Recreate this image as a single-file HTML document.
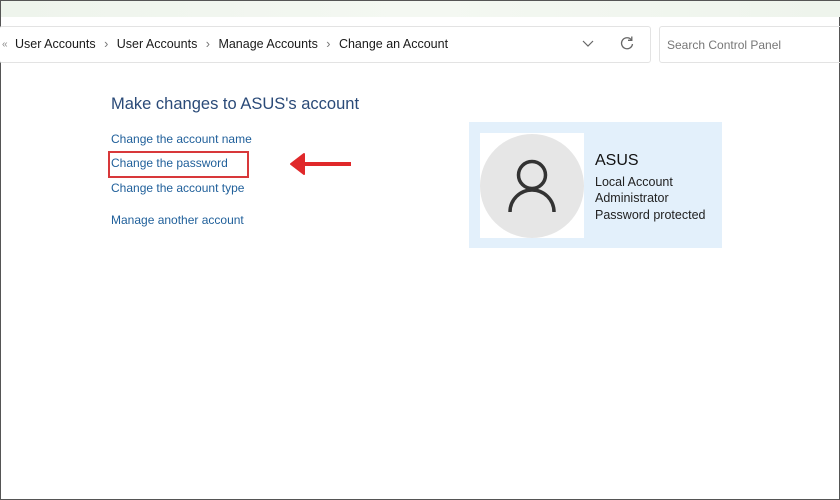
<!DOCTYPE html>
<html><head><style>
*{margin:0;padding:0;box-sizing:border-box}
body{width:840px;height:500px;overflow:hidden;background:#fff;font-family:"Liberation Sans",sans-serif;position:relative;border:1px solid #555}
.top{position:absolute;left:0;top:0;width:840px;height:16px;background:linear-gradient(90deg,#eef4ec,#f4f8f2 50%,#eef4ec)}
.addr{position:absolute;left:-2px;top:25px;width:652px;height:37px;border:1px solid #e3e3e3;border-radius:3px;background:#fff}
.search{position:absolute;left:658px;top:25px;width:190px;height:37px;border:1px solid #e3e3e3;border-radius:3px}
.t{position:absolute;white-space:nowrap}
.crumb{top:36px;font-size:12.5px;color:#1a1a1a}
.lnk{color:#1f5f9a;font-size:12px;left:110px}
</style></head><body>
<div class="top"></div>
<div class="addr"></div>
<div class="search"></div>
<div class="t crumb" style="left:1px;color:#888;font-size:10px;top:38px">«</div>
<div class="t crumb" style="left:14px">User Accounts <span style="color:#777;margin:0 5px">›</span> User Accounts <span style="color:#777;margin:0 5px">›</span> Manage Accounts <span style="color:#777;margin:0 5px">›</span> Change an Account</div>
<svg style="position:absolute;left:580px;top:37px" width="14" height="10"><path d="M2 3 L7 8 L12 3" stroke="#666" fill="none" stroke-width="1.2"/></svg>
<svg style="position:absolute;left:618px;top:34px" width="16" height="16"><path d="M12.5 5 A5.5 5.5 0 1 0 13.5 9" stroke="#666" fill="none" stroke-width="1.3"/><path d="M12.8 1.5 V5.3 H9" stroke="#666" fill="none" stroke-width="1.3"/></svg>
<div class="t" style="left:666px;top:37px;font-size:12px;color:#777">Search Control Panel</div>
<div class="t" style="left:110px;top:94px;font-size:16.5px;color:#2a4a78">Make changes to ASUS's account</div>
<div class="t lnk" style="top:131px">Change the account name</div>
<div class="t lnk" style="top:155px">Change the password</div>
<div class="t lnk" style="top:180px">Change the account type</div>
<div class="t lnk" style="top:212px">Manage another account</div>
<div style="position:absolute;left:107px;top:150px;width:141px;height:27px;border:2px solid #d8383a"></div>
<svg style="position:absolute;left:287px;top:151px" width="66" height="26"><path d="M63 12 H14" stroke="#e0282a" stroke-width="4"/><path d="M16 2 L3 12 L16 22 Z" fill="#e0282a" stroke="#e0282a" stroke-width="2" stroke-linejoin="round"/></svg>
<div style="position:absolute;left:468px;top:121px;width:253px;height:126px;background:#e3f0fb"></div>
<div style="position:absolute;left:479px;top:132px;width:104px;height:105px;background:#fff"></div>
<div style="position:absolute;left:479px;top:133px;width:104px;height:104px;border-radius:50%;background:#e6e6e6"></div>
<svg style="position:absolute;left:479px;top:133px" width="104" height="104"><circle cx="52" cy="41" r="13.5" stroke="#333" stroke-width="3.5" fill="none"/><path d="M30 78 A22 22 0 0 1 74 78" stroke="#333" stroke-width="3.5" fill="none"/></svg>
<div class="t" style="left:594px;top:151px;font-size:16px;color:#111">ASUS</div>
<div class="t" style="left:594px;top:174px;font-size:12.5px;color:#222">Local Account</div>
<div class="t" style="left:594px;top:190px;font-size:12.5px;color:#222">Administrator</div>
<div class="t" style="left:594px;top:207px;font-size:12.5px;color:#222">Password protected</div>
</body></html>
